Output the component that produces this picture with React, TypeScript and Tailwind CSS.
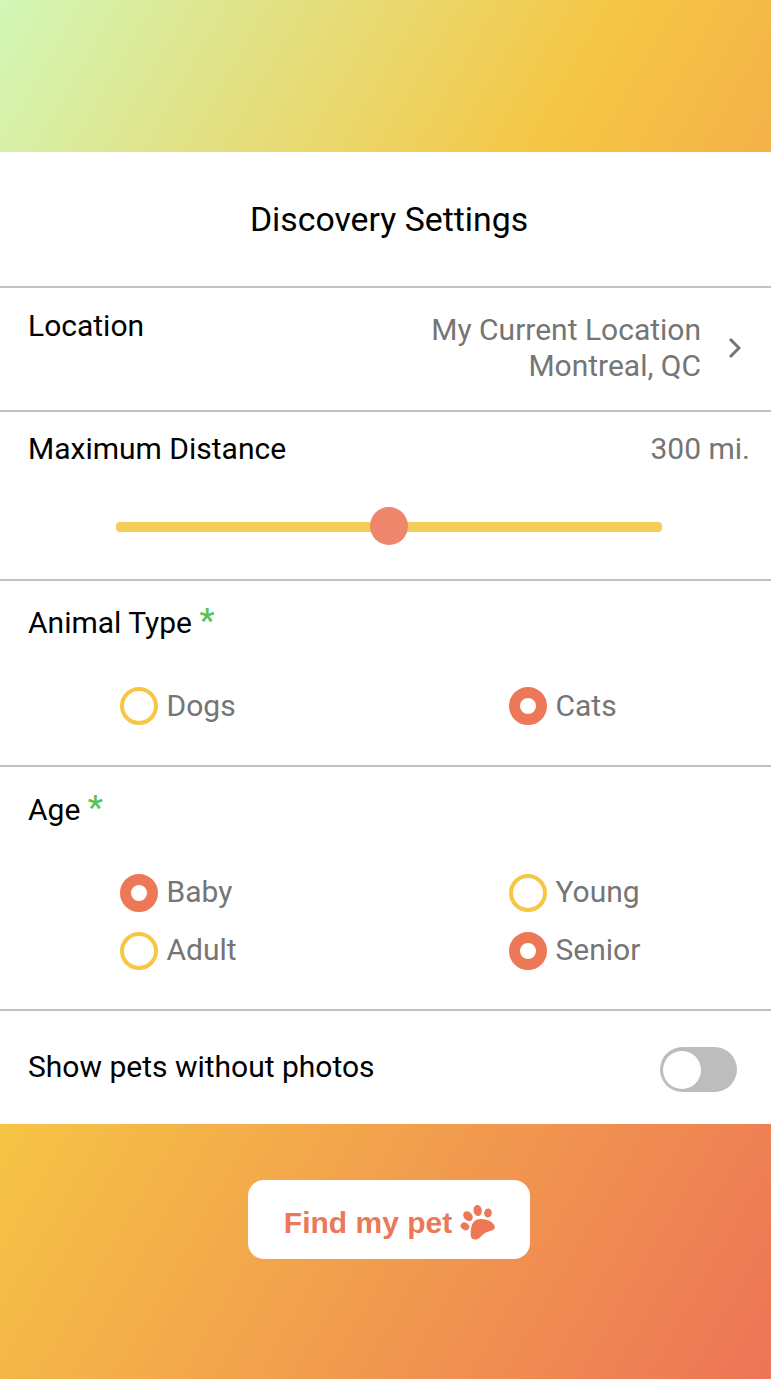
import { useState } from 'react';

function Choice({ label, checked, onToggle }: { label: string; checked: boolean; onToggle: () => void }) {
  return (
    <button type="button" onClick={onToggle} className="flex h-[38px] items-center gap-[9px] text-[#757575]">
      <span
        className={
          checked
            ? 'size-[38px] rounded-full border-[11.5px] border-[#ec7858] bg-white'
            : 'size-[38px] rounded-full border-4 border-[#f6c745] bg-white'
        }
      />
      <span className="-ml-[0.5px] -mt-[1.5px] leading-[36px]">{label}</span>
    </button>
  );
}

function Required() {
  return (
    <span className="-mt-[3px] inline-block h-[36px] align-top text-[34px] font-medium leading-[36px] text-[#5bc25b]">
      *
    </span>
  );
}

function Paw() {
  return (
    <svg viewBox="30 28 108 108" className="-mt-[2px] size-9 fill-[#ec7858]">
      <ellipse cx="45" cy="95" rx="13.5" ry="11" transform="rotate(30 45 95)" />
      <ellipse cx="54" cy="64.5" rx="12.5" ry="16.5" transform="rotate(-42 54 64.5)" />
      <ellipse cx="83" cy="47.5" rx="12.5" ry="16.5" transform="rotate(-8 83 47.5)" />
      <ellipse cx="114" cy="55" rx="11.5" ry="13.5" transform="rotate(12 114 55)" />
      <path d="M62 120C62 98 66 83 78 76C90 70 111 74 123 81C132 87 137 95 133 102C129 109 118 108 109 113C98 118 93 127 85 132C74 138 62 134 62 120Z" />
    </svg>
  );
}

export default function App() {
  const [picked, setPicked] = useState<string[]>(['Cats', 'Baby', 'Senior']);
  const toggle = (name: string) =>
    setPicked((p) => (p.includes(name) ? p.filter((n) => n !== name) : [...p, name]));
  const choice = (name: string) => (
    <Choice label={name} checked={picked.includes(name)} onToggle={() => toggle(name)} />
  );

  return (
    <div className="flex h-[1379px] w-[771px] flex-col bg-[linear-gradient(120deg,#d2f7b7_0%,#f6c644_40%,#ed7457_100%)] pt-[152px] font-['Roboto',sans-serif] text-[30px] text-black">
      <main className="flex h-[972px] flex-col divide-y-2 divide-[#c1c1c1] bg-white">
        <header className="flex h-[136px] items-center justify-center pl-[7px] pt-[2px]">
          <h1 className="text-[33.8px] leading-[40px]">Discovery Settings</h1>
        </header>
        <section className="flex h-[124px] items-start justify-between pl-7 pr-[30px] pt-[20px]">
          <h2 className="leading-[36px]">Location</h2>
          <div className="flex items-center gap-[27px] pt-1 text-[#757575]">
            <p className="text-right leading-[36px]">
              My Current Location
              <br />
              Montreal, QC
            </p>
            <svg viewBox="0 0 13 22" className="h-[22px] w-[13px] fill-none stroke-[#757575] stroke-[3]">
              <path d="M2 2L11 11L2 20" />
            </svg>
          </div>
        </section>
        <section className="flex h-[169px] flex-col pl-7 pr-[21px] pt-[19px]">
          <div className="flex justify-between leading-[36px]">
            <h2>Maximum Distance</h2>
            <span className="text-[#757575]">300 mi.</span>
          </div>
          <div className="ml-[88px] mt-[40.4px] grid h-[38px] w-[546px] items-center">
            <div className="col-start-1 row-start-1 mt-px h-[10px] rounded-[4px] bg-[#f4cc59]" />
            <div className="col-start-1 row-start-1 size-[38px] justify-self-center rounded-full bg-[#ee866b]" />
          </div>
        </section>
        <section className="h-[186px] pl-7 pt-6">
          <h2 className="h-[36px] leading-[36px]">
            Animal Type <Required />
          </h2>
          <div className="grid grid-cols-[389px_1fr] pl-[92px] pt-[46.4px]">
            {choice('Dogs')}
            {choice('Cats')}
          </div>
        </section>
        <section className="h-[244px] pl-7 pt-[25px]">
          <h2 className="h-[36px] leading-[36px]">
            Age <Required />
          </h2>
          <div className="grid grid-cols-[389px_1fr] gap-y-[20.5px] pl-[92px] pt-[45.5px]">
            {choice('Baby')}
            {choice('Young')}
            {choice('Adult')}
            {choice('Senior')}
          </div>
        </section>
        <section className="flex flex-1 items-start justify-between pl-7 pr-[34px] pt-[36px]">
          <h2 className="leading-[40px]">Show pets without photos</h2>
          <div className="flex h-[45px] w-[77px] items-center rounded-full bg-[#bdbdbd] pl-[3.4px]">
            <div className="size-[38px] rounded-full bg-white" />
          </div>
        </section>
      </main>
      <footer className="flex justify-center pl-[7px] pt-[56.4px]">
        <button
          type="button"
          className="flex h-[79px] w-[282px] items-center justify-center gap-2 rounded-[16px] bg-white pl-[2px] pt-[6px] font-['Liberation_Sans',sans-serif] text-[30px] font-bold text-[#ec7858]"
        >
          Find my pet
          <Paw />
        </button>
      </footer>
    </div>
  );
}
